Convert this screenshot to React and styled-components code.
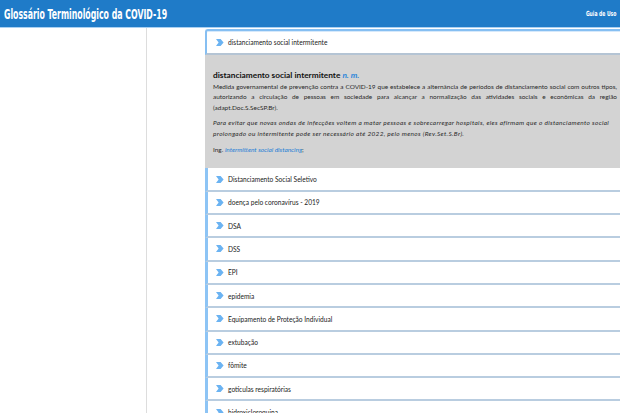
import React from 'react';
import styled, { createGlobalStyle } from 'styled-components';

const Global = createGlobalStyle`
  html, body {
    margin: 0;
    padding: 0;
    background: #ffffff;
    overflow: hidden;
  }
  body {
    font-family: Lato, "Open Sans", sans-serif;
    color: #222;
  }
`;

const Page = styled.div`
  width: 620px;
  height: 413px;
  display: flex;
  flex-direction: column;
  overflow: hidden;
`;

const Header = styled.header`
  height: 27px;
  flex: none;
  background: #1f7bc8;
  border-bottom: 1px solid #a9d0f2;
  display: flex;
  align-items: center;
  justify-content: space-between;
  padding: 0 4px 0 4px;
`;

/* the site's title font is a tall condensed face; squeeze DejaVu to match */
const Title = styled.h1`
  margin: 0;
  font-family: "DejaVu Sans", sans-serif;
  font-stretch: condensed;
  font-weight: bold;
  font-size: 14px;
  color: #ffffff;
  white-space: nowrap;
  transform: scaleX(0.62);
  transform-origin: left center;
`;

const HeaderLink = styled.a`
  font-family: "DejaVu Sans", sans-serif;
  font-stretch: condensed;
  font-weight: bold;
  font-size: 7px;
  color: #ffffff;
  text-decoration: none;
  white-space: nowrap;
  transform: scaleX(0.72);
  transform-origin: right center;
`;

const Body = styled.div`
  flex: 1;
  display: flex;
  min-height: 0;
`;

const Sidebar = styled.aside`
  width: 146px;
  flex: none;
  border-right: 1px solid #dddddd;
`;

const Content = styled.main`
  flex: 1;
  padding: 1px 0 0 58px;
  display: flex;
  flex-direction: column;
`;

const Chevron = () => (
  <svg width="8" height="7" viewBox="0 0 8 7">
    <polygon points="0,0 4.6,0 7.6,3.5 4.6,7 0,7 2.6,3.5" fill="#6bb3f2" />
  </svg>
);

const Item = styled.div`
  display: flex;
  align-items: center;
  gap: 4px;
  padding-left: 8px;
  font-size: 6.6px;
  color: #222;
  flex: none;
  height: 21.3px;
  border-left: 3px solid #8dc4f5;
  border-bottom: 2px solid #b9cde0;
  ${p =>
    p.$active &&
    `
    height: 22px;
    border: 2px solid #86bff2;
    border-right: none;
    border-bottom: 2px solid #b4c4d4;
    border-radius: 3px 0 0 0;
    box-shadow: inset 0 1px 0 #d6e9fb;
    padding-left: 9px;
  `}
`;

const Panel = styled.section`
  background: #d3d3d3;
  padding: 15px 3px 7px 8px;
  flex: none;
`;

const Term = styled.div`
  font-weight: bold;
  font-size: 8.3px;
  color: #111;
  margin-bottom: 2px;
`;

const Gram = styled.span`
  font-weight: bold;
  font-style: italic;
  color: #2b86da;
`;

const Para = styled.p`
  margin: 0 0 ${p => p.$gap || 6}px 0;
  font-size: 6.45px;
  line-height: 10.4px;
  text-align: ${p => (p.$justify ? 'justify' : 'left')};
  font-style: ${p => (p.$italic ? 'italic' : 'normal')};
  letter-spacing: ${p => (p.$italic ? '0.33px' : '0')};
  color: #2a2a2a;
`;

const Eng = styled.span`
  font-style: italic;
  color: #1e7fd6;
`;

const terms = [
  'Distanciamento Social Seletivo',
  'doença pelo coronavírus - 2019',
  'DSA',
  'DSS',
  'EPI',
  'epidemia',
  'Equipamento de Proteção Individual',
  'extubação',
  'fômite',
  'gotículas respiratórias',
  'hidroxicloroquina',
];

export default function App() {
  return (
    <Page>
      <Global />
      <Header>
        <Title>Glossário Terminológico da COVID-19</Title>
        <HeaderLink href="#">Guia de Uso</HeaderLink>
      </Header>
      <Body>
        <Sidebar />
        <Content>
          <Item $active>
            <Chevron />
            distanciamento social intermitente
          </Item>
          <Panel>
            <Term>
              distanciamento social intermitente <Gram>n. m.</Gram>
            </Term>
            <Para $justify $gap={5}>
              Medida governamental de prevenção contra a COVID-19 que estabelece a alternância de períodos de
              distanciamento social com outros tipos, autorizando a circulação de pessoas em sociedade para alcançar a
              normalização das atividades sociais e econômicas da região (adapt.Doc.S.SecSP.Br).
            </Para>
            <Para $italic>
              Para evitar que novas ondas de infecções voltem a matar pessoas e sobrecarregar hospitais, eles afirmam
              que o distanciamento social prolongado ou intermitente pode ser necessário até 2022, pelo menos
              (Rev.Set.S.Br).
            </Para>
            <Para>
              Ing. <Eng>intermittent social distancing</Eng>;
            </Para>
          </Panel>
          {terms.map(t => (
            <Item key={t}>
              <Chevron />
              {t}
            </Item>
          ))}
        </Content>
      </Body>
    </Page>
  );
}
